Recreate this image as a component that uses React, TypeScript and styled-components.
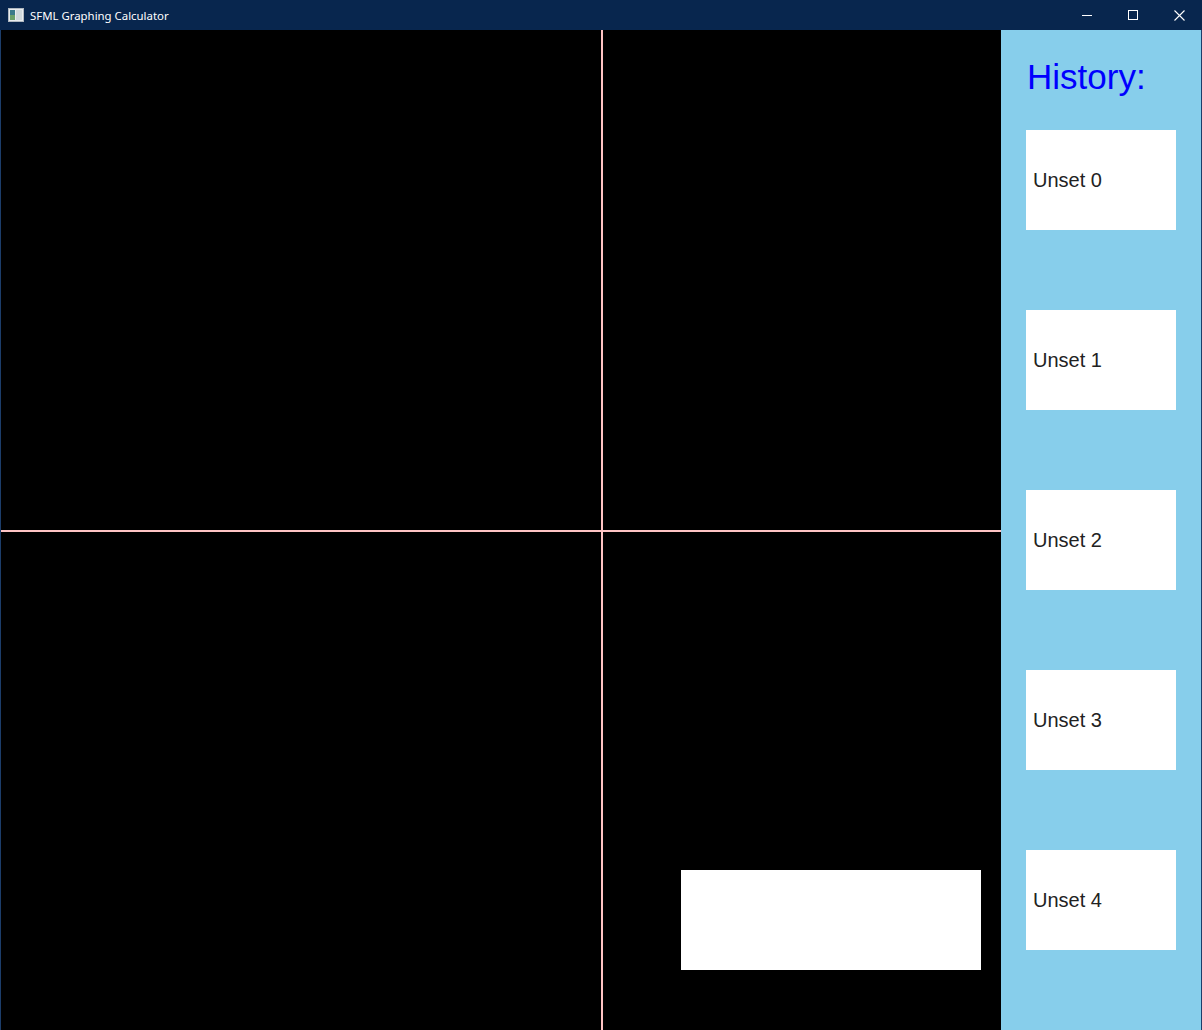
import React from "react";
import styled, { createGlobalStyle } from "styled-components";

const Global = createGlobalStyle`
  html, body { margin: 0; padding: 0; background: #000; }
  body { font-family: "Liberation Sans", Arial, sans-serif; }
`;

const Window = styled.div`
  width: 1202px;
  height: 1030px;
  display: flex;
  flex-direction: column;
  background: #000;
  overflow: hidden;
`;

const TitleBar = styled.div`
  height: 30px;
  flex: 0 0 30px;
  background: #08264e;
  display: flex;
  align-items: center;
  color: #fff;
`;

const AppIcon = styled.svg`
  margin-left: 8px;
  width: 16px;
  height: 14px;
`;

const Title = styled.span`
  margin-left: 6px;
  font-family: "Noto Sans", "Open Sans", sans-serif;
  font-size: 11.4px;
  flex: 1;
`;

const WinButton = styled.div`
  width: 46px;
  height: 30px;
  display: flex;
  align-items: center;
  justify-content: center;
`;

const Body = styled.div`
  flex: 1;
  display: flex;
  border-left: 1px solid #1c3d6a;
  border-right: 1px solid #1c3d6a;
`;

const Graph = styled.div`
  position: relative;
  width: 1000px;
  height: 100%;
  background: #000;
`;

const VAxis = styled.div`
  position: absolute;
  left: 600px;
  top: 0;
  bottom: 0;
  width: 2px;
  background: #ffc4c4;
`;

const HAxis = styled.div`
  position: absolute;
  top: 500px;
  left: 0;
  right: 0;
  height: 2px;
  background: #ffc4c4;
`;

const InputBox = styled.div`
  position: absolute;
  left: 680px;
  top: 840px;
  width: 300px;
  height: 100px;
  background: #fff;
`;

const Sidebar = styled.div`
  width: 200px;
  background: #87ceeb;
  display: flex;
  flex-direction: column;
  padding: 27px 0 0 25px;
  box-sizing: border-box;
`;

const Heading = styled.div`
  font-family: "Liberation Sans", Arial, sans-serif;
  font-size: 35px;
  line-height: 40px;
  color: #0000ff;
  margin-left: 1px;
  margin-bottom: 33px;
`;

const List = styled.div`
  display: flex;
  flex-direction: column;
  gap: 80px;
`;

const Card = styled.div`
  width: 150px;
  height: 100px;
  background: #fff;
  display: flex;
  align-items: center;
  padding-left: 7px;
  box-sizing: border-box;
  font-family: "Liberation Sans", Arial, sans-serif;
  font-size: 20px;
  color: #222;
`;

export default function App() {
  return (
    <>
      <Global />
      <Window>
        <TitleBar>
          <AppIcon viewBox="0 0 16 14">
            <rect x="0.5" y="0.5" width="15" height="13" fill="#e8ecef" stroke="#b0b8c0" />
            <rect x="2" y="2" width="5" height="10" fill="#3a7a8a" />
            <rect x="8" y="2" width="6" height="10" fill="#cfd8dc" />
            <rect x="2" y="7" width="5" height="5" fill="#6aa06a" />
          </AppIcon>
          <Title>SFML Graphing Calculator</Title>
          <WinButton>
            <svg width="10" height="10" viewBox="0 0 10 10">
              <line x1="0" y1="5.5" x2="10" y2="5.5" stroke="#fff" strokeWidth="1" />
            </svg>
          </WinButton>
          <WinButton>
            <svg width="10" height="10" viewBox="0 0 10 10">
              <rect x="0.5" y="0.5" width="9" height="9" fill="none" stroke="#fff" strokeWidth="1" />
            </svg>
          </WinButton>
          <WinButton>
            <svg width="11" height="11" viewBox="0 0 11 11">
              <path d="M0.5 0.5 L10.5 10.5 M10.5 0.5 L0.5 10.5" stroke="#fff" strokeWidth="1.1" />
            </svg>
          </WinButton>
        </TitleBar>
        <Body>
          <Graph>
            <VAxis />
            <HAxis />
            <InputBox />
          </Graph>
          <Sidebar>
            <Heading>History:</Heading>
            <List>
              {[0, 1, 2, 3, 4].map((i) => (
                <Card key={i}>Unset {i}</Card>
              ))}
            </List>
          </Sidebar>
        </Body>
      </Window>
    </>
  );
}
